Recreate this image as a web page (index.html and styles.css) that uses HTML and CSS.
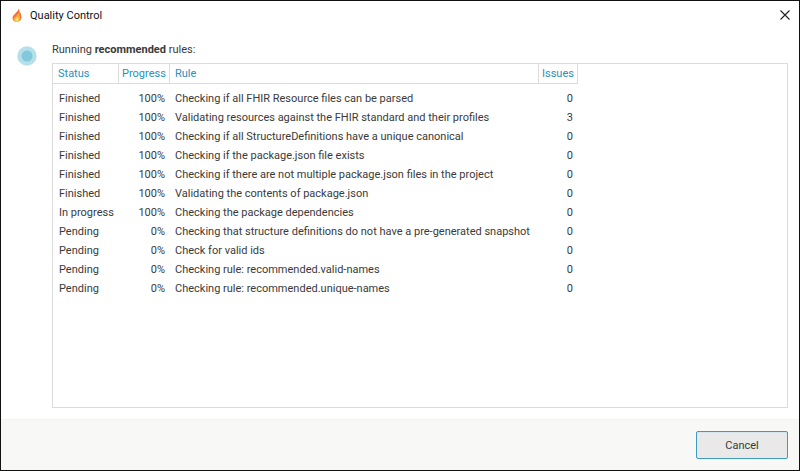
FILE: index.html
```html
<!DOCTYPE html>
<html lang="en">
<head>
    <meta charset="UTF-8">
    <meta name="viewport" content="width=device-width, initial-scale=1.0">
    <title>Quality Control</title>
    <link rel="stylesheet" href="styles.css">
</head>
<body>
    <div class="window">
        <header class="title-bar">
            <svg class="flame" viewBox="0 0 12 14" aria-hidden="true">
                <path d="M7.500.5C7.600 2.300 6.300 3.300 5 4.600L4.400 5.400C3 6.500 1.500 7.800 1.500 10 1.500 12.400 3.200 13.700 5.900 13.700 8.900 13.700 10.500 12 10.500 9.300 10.500 7.600 9.700 6.600 9.500 4.600L8.700 5.200C8.800 3.300 8.600 1.500 7.500.5Z" fill="#ee7440"/>
                <path d="M7.200 5C7.400 6.500 4.800 7.600 4.200 9 3.200 9.400 2.600 10 2.600 10.900 2.600 12.600 4 13.500 5.900 13.500 8 13.500 9.300 12.500 9.300 10.400 9.300 9.400 8.800 8.800 8.600 7.600 8.200 6.600 8 5.600 7.200 5Z" fill="#fba93a"/>
                <path d="M6.400 8.500C6.200 10 4.200 10.400 4.200 11.800 4.200 12.800 5 13.400 5.900 13.400 7 13.400 7.800 12.700 7.800 11.600 7.800 10.500 6.800 10 6.400 8.500Z" fill="#ffe26a"/>
            </svg>
            <h1>Quality Control</h1>
            <button type="button" class="close-btn" aria-label="Close">
                <svg viewBox="0 0 10 10" aria-hidden="true">
                    <path d="M.5.5L9.500 9.500M9.500.5L.5 9.500" stroke="#222" stroke-width="1.100" fill="none"/>
                </svg>
            </button>
        </header>

        <main class="content">
            <svg class="spinner" viewBox="0 0 20 20" aria-hidden="true">
                <circle cx="10" cy="10" r="9.700" fill="#b5dfea"/>
                <circle cx="10" cy="10" r="5.500" fill="#82c8da"/>
            </svg>
            <div class="rules">
                <p class="caption">Running <strong>recommended</strong> rules:</p>
                <div class="rule-list">
                    <table>
                        <thead>
                            <tr><th class="status">Status</th><th class="progress">Progress</th><th class="rule">Rule</th><th class="issues">Issues</th></tr>
                        </thead>
                        <tbody>
                            <tr><td>Finished</td><td>100%</td><td>Checking if all FHIR Resource files can be parsed</td><td>0</td></tr>
                            <tr><td>Finished</td><td>100%</td><td>Validating resources against the FHIR standard and their profiles</td><td>3</td></tr>
                            <tr><td>Finished</td><td>100%</td><td>Checking if all StructureDefinitions have a unique canonical</td><td>0</td></tr>
                            <tr><td>Finished</td><td>100%</td><td>Checking if the package.json file exists</td><td>0</td></tr>
                            <tr><td>Finished</td><td>100%</td><td>Checking if there are not multiple package.json files in the project</td><td>0</td></tr>
                            <tr><td>Finished</td><td>100%</td><td>Validating the contents of package.json</td><td>0</td></tr>
                            <tr><td>In progress</td><td>100%</td><td>Checking the package dependencies</td><td>0</td></tr>
                            <tr><td>Pending</td><td>0%</td><td>Checking that structure definitions do not have a pre-generated snapshot</td><td>0</td></tr>
                            <tr><td>Pending</td><td>0%</td><td>Check for valid ids</td><td>0</td></tr>
                            <tr><td>Pending</td><td>0%</td><td>Checking rule: recommended.valid-names</td><td>0</td></tr>
                            <tr><td>Pending</td><td>0%</td><td>Checking rule: recommended.unique-names</td><td>0</td></tr>
                        </tbody>
                    </table>
                </div>
            </div>
        </main>

        <footer class="actions">
            <button type="button" class="cancel-btn">Cancel</button>
        </footer>
    </div>
</body>
</html>
```
FILE: styles.css
```css
* {
    box-sizing: border-box;
}

body {
    margin: 0;
    font-family: Roboto, "Open Sans", sans-serif;
    font-size: 11px;
    line-height: 18px;
    color: #3a3a3a;
    background: #fff;
}

.window {
    display: flex;
    flex-direction: column;
    min-height: 100vh;
    border: 1px solid #111;
}

/* Title bar */
.title-bar {
    display: flex;
    align-items: center;
    height: 28px;
    padding: 0 9px 0 10px;
}

.flame {
    width: 12px;
    height: 14px;
}

.title-bar h1 {
    flex: 1;
    margin: 0 0 0 7px;
    padding-top: 2px;
    font-size: 11px;
    font-weight: normal;
    color: #111;
}

.close-btn {
    display: flex;
    padding: 0;
    border: none;
    background: none;
}

.close-btn svg {
    width: 10px;
    height: 10px;
}

/* Rule list */
.content {
    flex: 1;
    display: flex;
    gap: 15px;
    padding: 12px 11px 11px 16px;
}

.spinner {
    flex: none;
    width: 20px;
    height: 20px;
    margin-top: 5px;
}

.rules {
    flex: 1;
    display: flex;
    flex-direction: column;
}

.caption {
    margin: 0 0 4px;
}

.rule-list {
    flex: 1;
    border: 1px solid #dcdcdc;
}

table {
    border-collapse: separate;
    border-spacing: 0;
    white-space: nowrap;
}

th {
    height: 20px;
    padding: 1px 5px 0;
    border-right: 1px solid #dcdcdc;
    border-bottom: 1px solid #dcdcdc;
    font-weight: normal;
    text-align: left;
    color: #2a8fbd;
}

.status {
    width: 66px;
}

.progress {
    width: 51px;
    padding: 1px 3px 0;
}

.rule {
    width: 369px;
}

.issues {
    width: 38px;
    padding: 1px 3px 0;
}

td {
    height: 19px;
    padding: 0 5px;
}

td:first-child {
    padding-left: 6px;
}

tbody::before {
    content: "";
    display: block;
    height: 5px;
}

td:nth-child(2),
td:nth-child(4) {
    text-align: right;
}

/* Footer */
.actions {
    display: flex;
    justify-content: flex-end;
    padding: 11px;
    border-top: 1px solid #f2f2f0;
    background: #f8f8f7;
}

.cancel-btn {
    width: 92px;
    height: 28px;
    padding: 2px 0 0;
    border: 1px solid #3d9cbc;
    border-radius: 2px;
    background: #e9e9e9;
    box-shadow: inset 0 1px 0 #d5e6ec;
    font: inherit;
    color: #3a3a3a;
}
```
